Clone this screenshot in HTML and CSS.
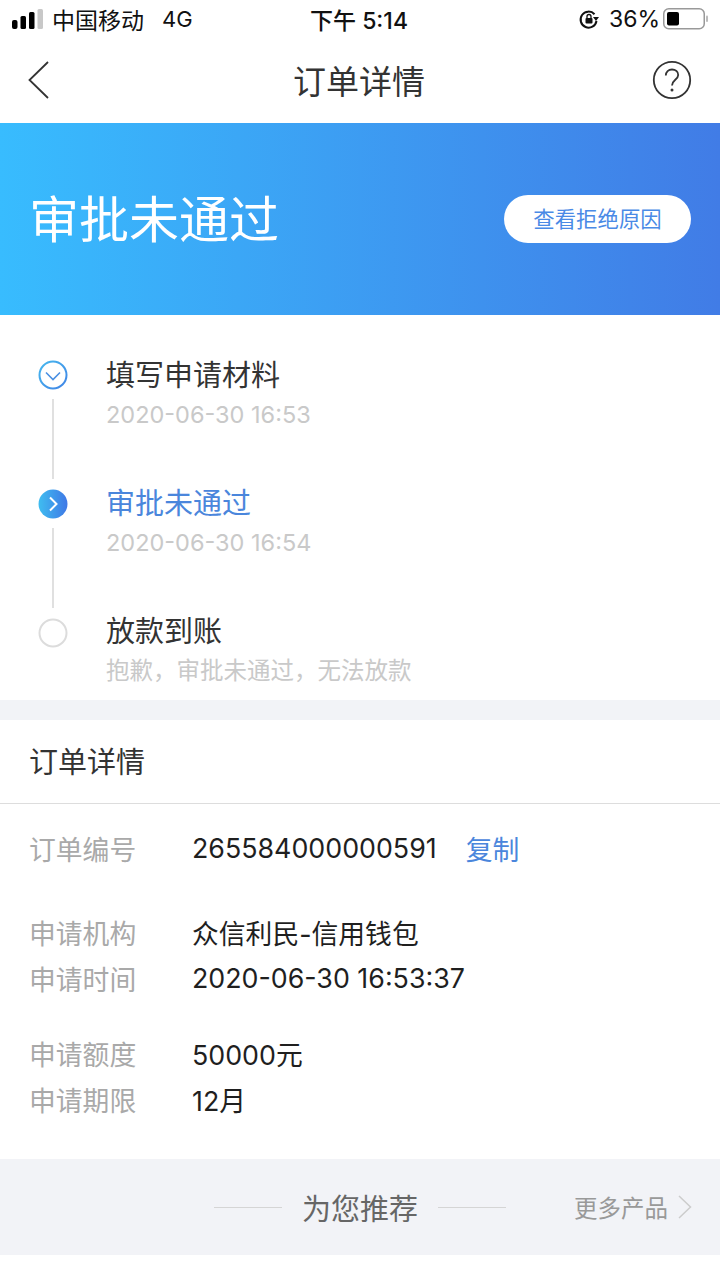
FILE: index.html
```html
<!DOCTYPE html>
<html lang="zh-CN">
<head>
<meta charset="utf-8">
<title>订单详情</title>
<link rel="stylesheet" href="styles.css">
</head>
<body>
<div class="status">
  <div class="status-l">
    <svg class="signal" width="31" height="20" viewBox="0 0 31 20"><rect x="0" y="11" width="5.500" height="9" rx="2" fill="#000"/><rect x="8.500" y="7" width="5.500" height="13" rx="1.500" fill="#000"/><rect x="17" y="3" width="5.500" height="17" rx="1.500" fill="#000"/><rect x="25.500" y="0" width="5.500" height="20" rx="1.500" fill="#c8c8c8"/></svg>
    <span class="carrier">中国移动</span><span class="net">4G</span>
  </div>
  <div class="status-c">下午 5:14</div>
  <div class="status-r">
    <svg class="lock" width="22" height="22" viewBox="0 0 22 22"><path d="M16.500 6.200A8 8 0 1 0 18.500 13" fill="none" stroke="#111" stroke-width="2"/><path d="M15 9h6l-3 4z" fill="#111"/><rect x="7.500" y="10" width="7" height="5.500" rx="1" fill="#111"/><path d="M9 10V8.500a2 2 0 0 1 4 0V10" fill="none" stroke="#111" stroke-width="1.300"/></svg>
    <span class="pct">36%</span>
    <svg class="batt" width="46" height="22" viewBox="0 0 46 22"><rect x="0.750" y="0.750" width="40.500" height="20" rx="5" fill="none" stroke="#999" stroke-width="1.500"/><rect x="4" y="4" width="12" height="13.500" rx="2" fill="#000"/><rect x="43" y="7.500" width="2" height="6.500" rx="1" fill="#bbb"/></svg>
  </div>
</div>
<div class="nav">
  <svg class="back" width="24" height="40" viewBox="0 0 24 40"><path d="M21 2 2.500 20 21 38" fill="none" stroke="#333" stroke-width="1.800"/></svg>
  <div class="nav-title">订单详情</div>
  <svg class="help" width="40" height="40" viewBox="0 0 40 40"><circle cx="20" cy="20" r="18.200" fill="none" stroke="#333" stroke-width="1.800"/><path d="M13.800 15.500c0-3.700 2.700-6 6.200-6s6.200 2.300 6.200 5.500c0 4.700-6.200 5-6.200 10.500" fill="none" stroke="#333" stroke-width="1.800"/><circle cx="20" cy="30" r="1.500" fill="#333"/></svg>
</div>
<div class="hero">
  <div class="hero-title">审批未通过</div>
  <div class="hero-btn">查看拒绝原因</div>
</div>
<div class="steps">
  <div class="step">
    <div class="rail">
      <svg class="dot" width="30" height="30" viewBox="0 0 30 30"><defs><linearGradient id="g1" x1="0" y1="0" x2="1" y2="1"><stop offset="0" stop-color="#46b8ee"/><stop offset="1" stop-color="#4084e6"/></linearGradient></defs><circle cx="15" cy="15" r="13.500" fill="none" stroke="url(#g1)" stroke-width="2"/><path d="M8 12.500 15 19.500 22 12.500" fill="none" stroke="#4a90e2" stroke-width="1.600"/></svg>
      <div class="line"></div>
    </div>
    <div class="step-body">
      <div class="step-title first">填写申请材料</div>
      <div class="step-sub">2020-06-30 16:53</div>
    </div>
  </div>
  <div class="step">
    <div class="rail">
      <svg class="dot" width="30" height="30" viewBox="0 0 30 30"><defs><linearGradient id="g2" x1="0" y1="0" x2="1" y2="0"><stop offset="0" stop-color="#3fbdf0"/><stop offset="1" stop-color="#3f78e6"/></linearGradient></defs><circle cx="15" cy="15" r="14.500" fill="url(#g2)"/><path d="M12 8.500 18.500 15 12 21.500" fill="none" stroke="#fff" stroke-width="2"/></svg>
      <div class="line"></div>
    </div>
    <div class="step-body">
      <div class="step-title active">审批未通过</div>
      <div class="step-sub">2020-06-30 16:54</div>
    </div>
  </div>
  <div class="step last">
    <div class="rail">
      <svg class="dot" width="30" height="30" viewBox="0 0 30 30"><circle cx="15" cy="15" r="13.500" fill="none" stroke="#dcdcdc" stroke-width="2"/></svg>
    </div>
    <div class="step-body">
      <div class="step-title final">放款到账</div>
      <div class="step-sub">抱歉，审批未通过，无法放款</div>
    </div>
  </div>
</div>
<div class="gap"></div>
<div class="sec-head">订单详情</div>
<div class="details">
  <div class="row g1"><span class="k">订单编号</span><span class="v">265584000000591</span><span class="copy">复制</span></div>
  <div class="row"><span class="k">申请机构</span><span class="v">众信利民-信用钱包</span></div>
  <div class="row"><span class="k">申请时间</span><span class="v">2020-06-30 16:53:37</span></div>
  <div class="row g2"><span class="k">申请额度</span><span class="v">50000元</span></div>
  <div class="row"><span class="k">申请期限</span><span class="v">12月</span></div>
</div>
<div class="rec">
  <div class="rec-c"><span class="rule"></span><span class="rec-title">为您推荐</span><span class="rule"></span></div>
  <div class="more"><span>更多产品</span><svg width="14" height="24" viewBox="0 0 14 24"><path d="M1 1l11.500 11L1 23" fill="none" stroke="#ccc" stroke-width="1.500"/></svg></div>
</div>
</body>
</html>
```

FILE: styles.css
```css
* { box-sizing: border-box; }
html, body { margin: 0; padding: 0; }
body { width: 720px; height: 1280px; overflow: hidden; background: #fff; font-family: Inter, "Noto Sans CJK SC", sans-serif; color: #333; }
.status { height: 38px; margin-bottom: 2px; display: flex; align-items: center; justify-content: space-between; padding: 0 12px 0 12px; position: relative; color: #111; font-size: 23px; }
.status-l { display: flex; align-items: center; }
.signal { margin-right: 9px; }
.net { margin-left: 18px; font-size: 22px; }
.carrier { font-size: 23px; }
.status-c { position: absolute; left: 0; right: 2px; text-align: center; font-size: 23px; font-weight: 500; }
.status-r { display: flex; align-items: center; }
.lock { margin-right: 9px; }
.pct { margin-right: 3px; }
.batt { margin-right: -1px; }
.nav { height: 83px; display: flex; align-items: center; justify-content: space-between; padding: 0 28px 4px 27px; position: relative; }
.nav-title { position: absolute; left: 0; right: 2px; text-align: center; font-size: 33px; color: #333; top: 19px; line-height: 46px; }
.help { margin-left: auto; }
.hero { height: 192px; padding: 2px 29px 0 29px; display: flex; align-items: center; justify-content: space-between; background: linear-gradient(90deg, #38bcfe, #417ce6); }
.hero-title { color: #fff; font-size: 50px; line-height: 60px; }
.hero-btn { width: 187px; height: 48px; margin-top: -2px; border-radius: 24px; background: #fff; color: #4a8ae6; font-size: 21.400px; line-height: 48px; text-align: center; }
.steps { padding: 41px 0 0 38px; height: 385px; }
.step { display: flex; height: 129px; }
.step.last { height: auto; }
.rail { width: 68px; display: flex; flex-direction: column; align-items: flex-start; flex: none; padding-top: 4px; }
.dot { display: block; flex: none; }
.line { width: 2px; height: 80px; margin: 9px 0 0 14px; background: #e0e0e0; }
.step-title { font-size: 29px; line-height: 38px; color: #333; }
.step-title.first { padding-top: 1px; }
.step-title.active { color: #4a86dc; }
.step-title.final { margin-top: -1px; }
.step-sub { font-size: 23.500px; line-height: 32px; margin-top: 4px; color: #c9c9c9; }
.gap { height: 20px; background: #f2f3f7; }
.sec-head { height: 84px; padding-left: 29px; font-size: 29px; line-height: 86px; border-bottom: 1px solid #ddd; color: #333; }
.details { padding: 21px 0 0 29px; height: 355px; }
.row { display: flex; align-items: center; height: 46px; font-size: 26.800px; }
.row.g1 { margin-bottom: 38px; }
.row.g2 { margin-top: 29px; }
.k { width: 163px; color: #a9a9a9; flex: none; }
.v { color: #1f1f1f; }
.copy { margin-left: 29px; color: #4a86dc; }
.rec { height: 96px; background: #f2f3f7; display: flex; align-items: center; justify-content: center; position: relative; }
.rec-c { display: flex; align-items: center; gap: 20px; }
.rule { width: 68px; height: 1px; background: #d5d5d5; }
.rec-title { font-size: 29px; color: #666; }
.more { position: absolute; right: 28px; top: 0; bottom: 0; display: flex; align-items: center; gap: 10px; font-size: 23.500px; color: #999; }
```
